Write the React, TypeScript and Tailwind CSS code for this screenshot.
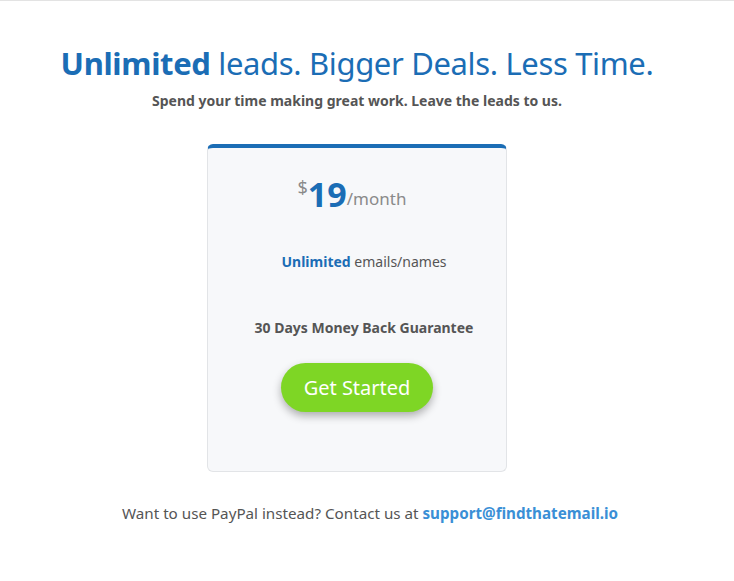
export default function App() {
  return (
    <div className="min-h-[581px] w-full bg-white border-t border-[#e3e3e3]" style={{ fontFamily: '"Noto Sans", "Open Sans", sans-serif' }}>
      <div className="flex flex-col items-center pt-[40px] pr-[20px]">
        <h1 className="text-[31px] leading-[44px] text-[#1b6db5] tracking-[-0.35px]">
          <span className="font-bold">Unlimited</span> leads. Bigger Deals. Less Time.
        </h1>
        <p className="mt-[6px] text-[14px] leading-[20px] font-bold text-[#555]">
          Spend your time making great work. Leave the leads to us.
        </p>
        <div className="mt-[33px] w-[300px] h-[328px] rounded-[6px] border border-[#e2e4e7] border-t-[4px] border-t-[#1b6db5] bg-[#f7f8fa] flex flex-col items-center">
          <div className="mt-[24px] mr-[10px] flex items-start text-[#8a8a8a]">
            <span className="text-[18px] leading-[20px] mt-[5px]">$</span>
            <span className="text-[34px] leading-[44px] font-bold text-[#1b6db5]">19</span>
            <span className="text-[17px] leading-[20px] mt-[17px]">/month</span>
          </div>
          <div className="mt-[36px] ml-[14px] text-[14px] leading-[20px] text-[#555]">
            <span className="font-bold text-[#1b6db5]">Unlimited</span> emails/names
          </div>
          <div className="mt-[46px] ml-[14px] text-[14px] leading-[20px] font-bold text-[#555]">
            30 Days Money Back Guarantee
          </div>
          <button className="mt-[25px] w-[152px] h-[49px] rounded-full bg-[#7ed625] text-white text-[20px] shadow-[0_4px_8px_rgba(0,0,0,0.3)]">
            Get Started
          </button>
        </div>
      </div>
      <p className="mt-[31px] pl-[6px] text-center text-[15.2px] leading-[20px] text-[#555]">
        Want to use PayPal instead? Contact us at{" "}
        <a className="font-bold text-[#3a8fd6]">support@findthatemail.io</a>
      </p>
    </div>
  );
}
